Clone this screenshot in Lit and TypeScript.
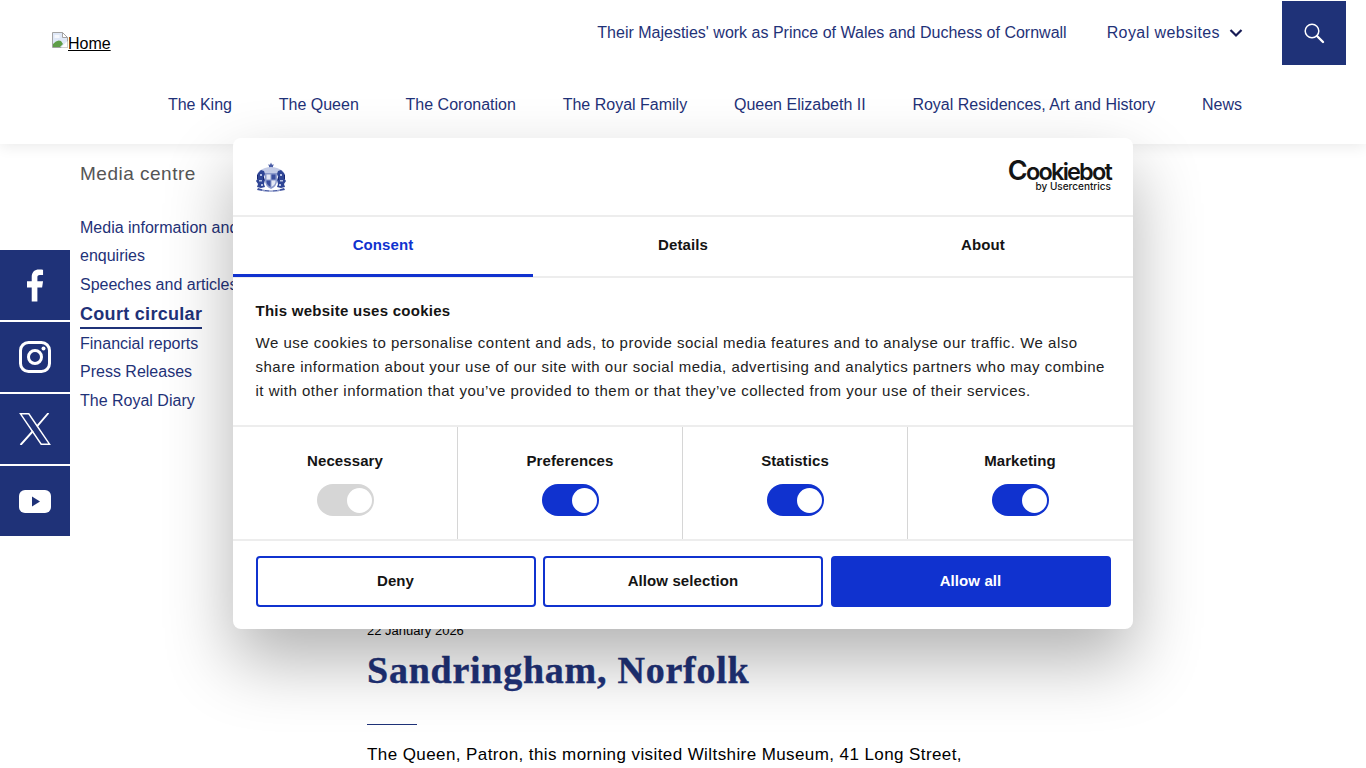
import { LitElement, html, css, svg } from "lit";
import { customElement } from "lit/decorators.js";

const crest = svg`<svg class="crest" viewBox="0 0 32 30" width="32" height="30" aria-hidden="true">
  <path d="M14 7 V4 L13 2.500 L15 2.800 L16 .5 L17 2.800 L19 2.500 L18 4 V7 z" fill="#4a5da6"/>
  <path d="M11 9 q5 -4 10 0 l1 2 h-12 z" fill="#9aa8d4"/>
  <path d="M4 9 q12 -8 24 0 l2 5 l-3 -2 h-22 l-3 2 z" fill="#c3cbe6"/>
  <path d="M3 11 l3 -3 l3 1 l1 3 l-1 3 l1 3 l-1 4 l1 3 l-4 1 l-4 -1 l1 -3 l-2 -3 l2 -3 l-1 -3 z" fill="#2f4595"/>
  <path d="M29 11 l-3 -3 l-3 1 l-1 3 l1 3 l-1 3 l1 4 l-1 3 l4 1 l4 -1 l-1 -3 l2 -3 l-2 -3 l1 -3 z" fill="#2f4595"/>
  <path d="M10 11 h12 v8 q0 5 -6 8 q-6 -3 -6 -8 z" fill="#8c9acb"/>
  <path d="M11.500 12.500 h4 v5 h-4 z M16.500 18.500 h4 v1 q0 3 -4 5.500 z" fill="#e4e8f4"/>
  <path d="M16.500 12.500 h4 v5 h-4 z M11.500 18.500 h4 v6.500 q-4 -2.500 -4 -5.500 z" fill="#3b4f9e"/>
  <path d="M5 12 h2 v2 h-2 z M25 12 h2 v2 h-2 z M4 18 h3 v1.500 h-3 z M25 18 h3 v1.500 h-3 z M6 22 h2 v2 h-2 z M24 22 h2 v2 h-2 z" fill="#b7c1e2"/>
  <path d="M2 13 h1 v4 h-1 z M29 13 h1 v4 h-1 z M8 15 h1 v3 h-1 z M23 15 h1 v3 h-1 z" fill="#16256f"/>
  <path d="M3 26 q13 5 26 0 l1 2 q-14 3.500 -28 0 z" fill="#3b4f9e"/>
  <path d="M7 27.500 h3 v1 h-3 z M14 28.500 h4 v1 h-4 z M22 27.500 h3 v1 h-3 z" fill="#dfe4f2"/>
</svg>`;

const brokenImage = svg`<svg viewBox="0 0 16 16" width="16" height="16" aria-hidden="true">
  <path d="M0.500 0.500 H10.500 L15.500 5.500 V15.500 H0.500 Z" fill="#dfe8f7" stroke="#a3a3a3"/>
  <path d="M10.500 0.500 V5.500 H15.500 Z" fill="#fff" stroke="#a3a3a3"/>
  <path d="M1 15 V12 Q5 7 9 9 L11 12 L8 15 Z" fill="#5f9e48"/>
  <path d="M2.500 3 h5 v3 h-5 z" fill="#f6f8fc"/>
  <path d="M9 15.500 L15.500 9 V15.500 Z" fill="#fff"/>
</svg>`;

const social = [
  svg`<svg viewBox="0 0 18 34" width="17" height="33"><path fill="#fff" d="M5 34 V19 H0 V12.500 H5 V8 C5 2.500 8.300 0 12.600 0 C14.700 0 16.500 .2 17 .3 V6 H13.700 C11.300 6 11 7.200 11 8.800 V12.500 H17 L16 19 H11 V34 Z"/></svg>`,
  svg`<svg viewBox="0 0 32 32" width="32" height="32"><rect x="1.500" y="1.500" width="29" height="29" rx="8" fill="none" stroke="#fff" stroke-width="3"/><circle cx="16" cy="16" r="6.500" fill="none" stroke="#fff" stroke-width="3"/><circle cx="24.500" cy="7.500" r="2" fill="#fff"/></svg>`,
  svg`<svg viewBox="0 0 32 32" width="32" height="32"><path d="M1.500 .8 H9.800 L30.500 31.200 H22.200 Z" fill="none" stroke="#fff" stroke-width="1.500"/><path d="M29.500 0 L18 13.300 M14 18 L1.500 32" fill="none" stroke="#fff" stroke-width="1.900"/></svg>`,
  svg`<svg viewBox="0 0 32 23" width="32" height="23"><rect width="32" height="23" rx="6" fill="#fff"/><path d="M13 6.500 L21 11.500 L13 16.500 Z" fill="#1f3278"/></svg>`,
];

const consent = [
  { label: "Necessary", on: false },
  { label: "Preferences", on: true },
  { label: "Statistics", on: true },
  { label: "Marketing", on: true },
];

@customElement("app-root")
export class AppRoot extends LitElement {
  static styles = css`
    :host { display: block; position: relative; height: 768px; overflow: hidden; background: #fff;
      font-family: "Liberation Sans", Arial, sans-serif; color: #000; }
    a { color: #1f3278; text-decoration: none; }

    header { height: 144px; box-sizing: border-box; box-shadow: 0 2px 14px rgba(0,0,0,.09); position: relative;
      background: #fff; display: flex; flex-direction: column; }
    .top { display: flex; align-items: flex-start; padding: 1px 20px 0 52px; height: 65px; }
    .home { display: flex; align-items: flex-start; margin-top: 31px; font-size: 16px; line-height: 22px;
      color: #000; }
    .home svg { flex: none; }
    .home span { text-decoration: underline; margin-top: 1px; }
    .top-links { margin-left: auto; display: flex; gap: 40px; padding-top: 22px; font-size: 16px; line-height: 20px; }
    .sites { display: flex; align-items: center; gap: 9px; letter-spacing: .41px; margin-right: 39px; }
    .search { width: 64px; height: 64px; background: #1f3278; display: flex; align-items: center; justify-content: center; }
    nav { display: flex; justify-content: flex-end; gap: 46.800px; padding: 29px 124px 0 0; font-size: 16px; line-height: 20px; }

    .page { display: flex; }
    .side { width: 367px; box-sizing: border-box; padding: 18px 0 0 80px; flex: none; }
    .side h2 { margin: 0 0 27.700px; font-size: 19px; line-height: 24px; font-weight: 400; color: #555; letter-spacing: .5px; }
    .side ul { list-style: none; margin: 0; padding: 0; font-size: 16px; line-height: 28.500px; }
    .side a.cur { display: inline-block; font-weight: 700; font-size: 18px; line-height: 26px; letter-spacing: .3px;
      border-bottom: 2px solid #1f3278; margin: 2px 0 0; }
    .side li.tall { width: 158px; white-space: nowrap; }

    main { padding-top: 479px; }
    .date { font-size: 13px; line-height: 16px; }
    h1 { margin: 9px 0 0; font-family: "Liberation Serif", serif; font-size: 38px; line-height: 44px; font-weight: 700; color: #1f3278; letter-spacing: .75px; -webkit-text-stroke: .4px #1f3278; }
    .rule { width: 50px; height: 1px; background: #1f3278; margin: 32px 0 19px; }
    main p { margin: 0; font-size: 17px; line-height: 22px; letter-spacing: .41px; white-space: nowrap; }

    .social { position: absolute; left: 0; top: 250px; width: 70px; display: flex; flex-direction: column; gap: 2px; }
    .social a { height: 70px; background: #1f3278; display: flex; align-items: center; justify-content: center; }

    .dialog { position: absolute; left: 233px; top: 138px; width: 900px; height: 491px; background: #fff; border-radius: 8px;
      box-shadow: 0 32px 68px rgba(0,0,0,.3); color: #141414; display: flex; flex-direction: column; }
    .d-head { height: 79px; flex: none; box-sizing: border-box; border-bottom: 2px solid #ededed; display: flex; align-items: center;
      justify-content: space-between; padding: 0 22px 0 22px; }
    .crest { display: block; }
    .logo { display: flex; flex-direction: column; align-items: flex-end; color: #141414; margin-bottom: 2px; }
    .logo b { font-family: "Inter", sans-serif; font-size: 23.500px; line-height: 22px; font-weight: 600; letter-spacing: -1.800px; }
    .logo b i { font-style: normal; font-size: 27px; letter-spacing: -1.500px; }
    .logo span { font-family: "Inter", sans-serif; font-size: 10px; line-height: 10px; font-weight: 500; margin-top: -2px; }
    .tabs { display: grid; grid-template-columns: repeat(3, 1fr); height: 61px; flex: none; box-sizing: border-box; border-bottom: 2px solid #ededed; }
    .tab { display: flex; align-items: center; justify-content: center; font-size: 15px; font-weight: 700; letter-spacing: .1px; padding-bottom: 3px; border-bottom: 3px solid transparent; box-sizing: border-box; height: 60px; }
    .tab.on { color: #1032cf; border-bottom-color: #1032cf; }
    .d-body { height: 149px; flex: none; box-sizing: border-box; padding: 24px 23px 0 22.500px; border-bottom: 2px solid #ededed; }
    .d-body h3 { margin: 0 0 12px; font-size: 15px; line-height: 17px; font-weight: 700; letter-spacing: .26px; }
    .d-body p { margin: 0; font-size: 15px; line-height: 24px; letter-spacing: .5px; color: #222; }
    .cats { display: grid; grid-template-columns: 224px repeat(3, 225px); height: 114px; flex: none; box-sizing: border-box; border-bottom: 2px solid #ededed; }
    .cat { display: flex; flex-direction: column; align-items: center; padding-top: 25px; border-left: 1px solid #d6d6d6; box-sizing: border-box; }
    .cat:first-child { border-left: 0; }
    .cat strong { font-size: 15px; line-height: 17px; font-weight: 700; letter-spacing: .1px; }
    .sw { width: 57px; height: 32px; box-sizing: border-box; border-radius: 16px; margin-top: 15px; background: #1032cf; display: flex; align-items: center; justify-content: flex-end; padding-right: 2px; }
    .sw.off { background: #d6d6d6; }
    .sw::after { content: ""; width: 25px; height: 25px; border-radius: 50%; background: #fff; }
    .btns { display: grid; grid-template-columns: 280px 280px 280px; gap: 7.500px; padding: 15px 0 0 22.500px; }
    .btn { height: 51px; box-sizing: border-box; border: 2px solid #1032cf; border-radius: 4px; padding-bottom: 2px; display: flex; align-items: center; justify-content: center; font-size: 15px; font-weight: 700; letter-spacing: .1px; background: #fff; color: #141414; }
    .btn.fill { background: #1032cf; color: #fff; }
  `;

  render() {
    return html`
      <header>
        <div class="top">
          <a class="home" href="#">${brokenImage}<span>Home</span></a>
          <div class="top-links">
            <a href="#">Their Majesties' work as Prince of Wales and Duchess of Cornwall</a>
            <a class="sites" href="#">Royal websites
              <svg viewBox="0 0 14 10" width="14" height="10"><path d="M1.500 2 L7 7.500 L12.500 2" fill="none" stroke="#171c55" stroke-width="2.200"/></svg>
            </a>
          </div>
          <a class="search" href="#" aria-label="Search">
            <svg viewBox="0 0 22 22" width="22" height="22"><circle cx="9" cy="9" r="6.800" fill="none" stroke="#fff" stroke-width="1.500"/><path d="M14 14 L20 20" stroke="#fff" stroke-width="2.400" stroke-linecap="round"/></svg>
          </a>
        </div>
        <nav>
          ${["The King", "The Queen", "The Coronation", "The Royal Family", "Queen Elizabeth II", "Royal Residences, Art and History", "News"].map((n) => html`<a href="#">${n}</a>`)}
        </nav>
      </header>

      <div class="page">
        <aside class="side">
          <h2>Media centre</h2>
          <ul>
            <li class="tall"><a href="#">Media information and<br />enquiries</a></li>
            <li><a href="#">Speeches and articles</a></li>
            <li><a class="cur" href="#">Court circular</a></li>
            <li><a href="#">Financial reports</a></li>
            <li><a href="#">Press Releases</a></li>
            <li><a href="#">The Royal Diary</a></li>
          </ul>
        </aside>
        <main>
          <div class="date">22 January 2026</div>
          <h1>Sandringham, Norfolk</h1>
          <div class="rule"></div>
          <p>The Queen, Patron, this morning visited Wiltshire Museum, 41 Long Street,</p>
        </main>
      </div>

      <div class="social">${social.map((s) => html`<a href="#">${s}</a>`)}</div>

      <section class="dialog">
        <div class="d-head">
          ${crest}
          <div class="logo"><b><i>C</i>ookiebot</b><span>by Usercentrics</span></div>
        </div>
        <div class="tabs">
          <div class="tab on">Consent</div><div class="tab">Details</div><div class="tab">About</div>
        </div>
        <div class="d-body">
          <h3>This website uses cookies</h3>
          <p>We use cookies to personalise content and ads, to provide social media features and to analyse our traffic. We also<br />share information about your use of our site with our social media, advertising and analytics partners who may combine<br />it with other information that you’ve provided to them or that they’ve collected from your use of their services.</p>
        </div>
        <div class="cats">
          ${consent.map((c) => html`<div class="cat"><strong>${c.label}</strong><div class="sw ${c.on ? "" : "off"}"></div></div>`)}
        </div>
        <div class="btns">
          <div class="btn">Deny</div><div class="btn">Allow selection</div><div class="btn fill">Allow all</div>
        </div>
      </section>
    `;
  }
}
